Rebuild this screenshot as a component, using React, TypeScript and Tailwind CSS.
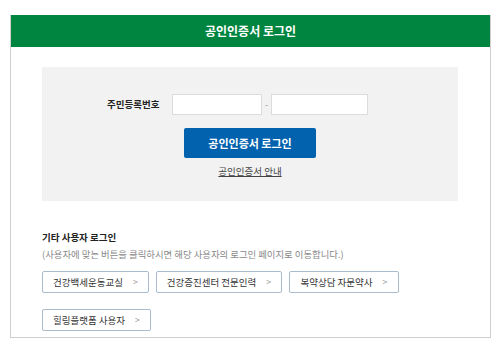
import React from 'react';

const font = { fontFamily: '"Noto Sans CJK KR", "Noto Sans", sans-serif' };

const otherLogins = [
  { label: '건강백세운동교실', w: 'w-[107px]' },
  { label: '건강증진센터 전문인력', w: 'w-[126px]' },
  { label: '복약상담 자문약사', w: 'w-[110px]' },
];

const UserButton = ({ label, w }: { label: string; w: string }) => (
  <button
    className={`${w} h-[22px] flex items-center justify-center gap-[10px] bg-white border border-[#a9bccd] rounded-[2px] text-[9.5px] text-[#333]`}
  >
    <span>{label}</span>
    <span className="text-[#999] text-[9px]">&gt;</span>
  </button>
);

const App = () => {
  return (
    <div className="w-[500px] h-[346px] bg-white pt-[15px] pl-[10px]" style={font}>
      <div className="w-[481px] h-[323px] border border-[#cfcfcf] border-t-0 bg-white">
        <div className="h-[32px] bg-[#008540] flex items-center justify-center">
          <h1 className="text-white text-[12px] font-bold">공인인증서 로그인</h1>
        </div>

        <div className="ml-[31px] mt-[20px] w-[416px] h-[134px] bg-[#f2f2f2] pt-[27px]">
          <div className="flex items-center pl-[65px]">
            <span className="w-[65px] text-[9.5px] font-bold text-[#222]">주민등록번호</span>
            <input className="w-[90px] h-[21px] bg-white border border-[#dcdcdc]" />
            <span className="w-[9px] text-center text-[9px] text-[#999]">-</span>
            <input className="w-[97px] h-[21px] bg-white border border-[#dcdcdc]" />
          </div>
          <div className="flex flex-col items-center">
            <button className="mt-[13px] w-[132px] h-[30px] bg-[#0262ae] rounded-[2px] text-white text-[11px] font-bold">
              공인인증서 로그인
            </button>
            <a className="mt-[6px] text-[9.5px] text-[#444] underline">공인인증서 안내</a>
          </div>
        </div>

        <div className="ml-[31px] mt-[29px]">
          <p className="text-[9.5px] font-bold text-[#222] leading-[14px]">기타 사용자 로그인</p>
          <p className="mt-[3px] text-[9.4px] text-[#888] leading-[14px]">
            (사용자에 맞는 버튼을 클릭하시면 해당 사용자의 로그인 페이지로 이동합니다.)
          </p>
          <div className="mt-[10px] flex gap-[7px]">
            {otherLogins.map((b) => (
              <UserButton key={b.label} label={b.label} w={b.w} />
            ))}
          </div>
          <div className="mt-[16px] flex">
            <UserButton label="힐링플랫폼 사용자" w="w-[109px]" />
          </div>
        </div>
      </div>
    </div>
  );
};

export default App;
